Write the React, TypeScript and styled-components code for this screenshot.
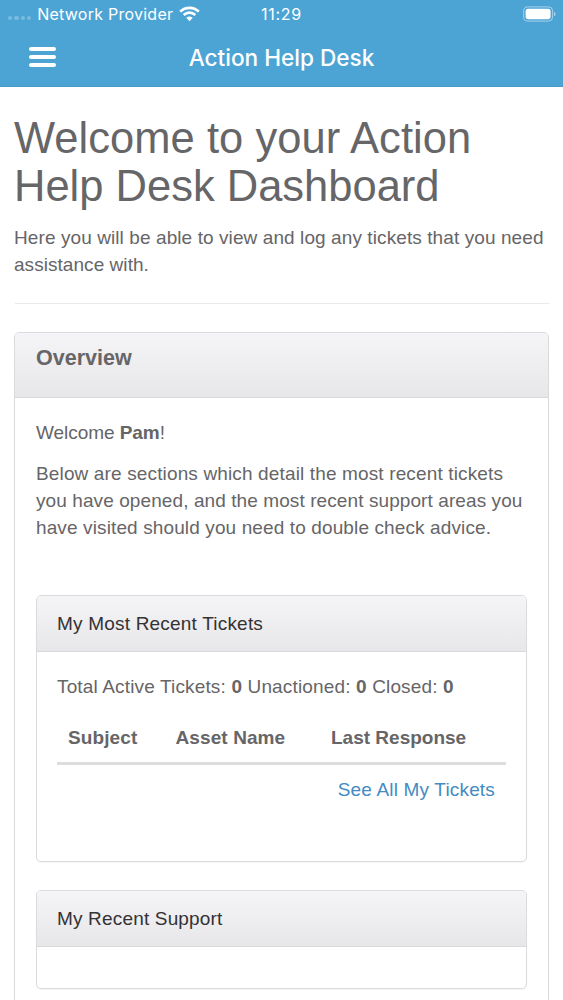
import React from 'react';
import styled, { createGlobalStyle } from 'styled-components';

const GlobalStyle = createGlobalStyle`
  * { box-sizing: border-box; }
  html, body { margin: 0; height: 1000px; overflow: hidden; }
  body {
    background: #fff;
    color: #666567;
    font: 19px/27px "Liberation Sans", Arial, sans-serif;
  }
  p, h1, h2 { margin: 0; }
`;

const Screen = styled.div`
  display: flex;
  flex-direction: column;
  height: 1000px;
  overflow: hidden;
`;

const TopBar = styled.header`
  flex: none;
  height: 87px;
  background: #4ca4d5;
  border-bottom: 1px solid #4799c8;
  color: #fff;
  font-family: Inter, sans-serif;
`;

const StatusBar = styled.div`
  display: grid;
  grid-template-columns: 1fr auto 1fr;
  align-items: center;
  height: 28px;
  padding: 0 7px 0 8px;
  font-size: 16px;
  line-height: 28px;
`;

const Carrier = styled.div`
  display: flex;
  align-items: center;
  white-space: nowrap;
`;

const Signal = styled.div`
  display: flex;
  gap: 2px;
  margin: 8px 6px 0 0;
`;

const Dot = styled.i`
  width: 4.3px;
  height: 4px;
  border-radius: 2px;
  background: rgba(255, 255, 255, 0.25);
`;

const WifiIcon = styled.svg`
  margin: -1px 0 0 6px;
`;

const BatteryIcon = styled.svg`
  justify-self: end;
`;

const NavBar = styled.div`
  display: grid;
  grid-template-columns: 1fr auto 1fr;
  align-items: center;
  height: 58px;
  padding: 0 29px;
`;

const MenuButton = styled.button`
  display: flex;
  flex-direction: column;
  gap: 3.6px;
  width: 27px;
  padding: 0;
  border: 0;
  background: none;
`;

const MenuLine = styled.span`
  height: 4px;
  border-radius: 2px;
  background: #fff;
`;

const Text = styled.span<{ $ls?: number }>`
  display: inline-block;
  white-space: nowrap;
  letter-spacing: ${(p) => p.$ls ?? 0.1}px;
`;

const Clock = styled.div`
  padding-right: 1px;
`;

const NavTitle = styled.div`
  padding-top: 1px;
  font-size: 22.6px;
  font-weight: 550;
  line-height: 30px;
`;

const Content = styled.main`
  flex: 1;
  display: flex;
  flex-direction: column;
  padding: 27px 14px 0;
`;

const Heading = styled.h1`
  font-size: 43.5px;
  line-height: 48px;
  font-weight: 400;
`;

const Intro = styled.p`
  margin-top: 14px;
`;

const Divider = styled.hr`
  width: 534px;
  height: 1px;
  margin: 25px 0 28px 1px;
  border: 0;
  background: #eae9eb;
`;

const Panel = styled.section<{ $height: number }>`
  flex: none;
  height: ${(p) => p.$height}px;
  border: 1px solid #dbdadd;
  border-radius: 5px;
  box-shadow: 0 1px 1px rgba(0, 0, 0, 0.04);
  background: #fff;
`;

const PanelHead = styled.div<{ $height: number }>`
  height: ${(p) => p.$height}px;
  padding: 14px 20px 0;
  border-bottom: 1px solid #d9d8db;
  border-radius: 4px 4px 0 0;
  background: linear-gradient(#f5f4f6, #e7e6e9);
  color: #333234;
`;

const PanelTitle = styled.h2`
  margin: -2px 0 0 1px;
  font-size: 21.5px;
  line-height: 27px;
  font-weight: 700;
  color: #666567;
`;

const OverviewBody = styled.div`
  padding: 21px 21px 0;
`;

const Details = styled.p`
  margin: 14px 0 54px;
`;

const PanelStack = styled.div`
  display: flex;
  flex-direction: column;
  gap: 28px;
`;

const TicketsBody = styled.div`
  padding: 21px 20px 0;
`;

const TableHead = styled.div`
  display: grid;
  grid-template-columns: 107.5px 155.5px 1fr;
  height: 65px;
  padding: 24px 0 0 11px;
  border-bottom: 3px solid #dddcdf;
  font-weight: 700;
`;

const LinkRow = styled.div`
  display: flex;
  justify-content: flex-end;
  padding: 11px 11px 0 0;
`;

const Link = styled.a`
  color: #438bc2;
`;

export default function App() {
  return (
    <Screen>
      <GlobalStyle />
      <TopBar>
        <StatusBar>
          <Carrier>
            <Signal>
              <Dot /><Dot /><Dot /><Dot />
            </Signal>
            <Text $ls={0.25}>Network Provider</Text>
            <WifiIcon width="21" height="16" viewBox="0 0 21 16" fill="none">
              <path d="M1.2 5.6C6.3.5 14.7.5 19.8 5.6" stroke="#fff" strokeWidth="2.7" />
              <path d="M4.7 9C8 5.8 13 5.8 16.3 9" stroke="#fff" strokeWidth="2.6" />
              <path d="M7.3 11.8Q10.5 9 13.7 11.8L10.5 15.2Z" fill="#fff" />
            </WifiIcon>
          </Carrier>
          <Clock><Text $ls={0.7}>11:29</Text></Clock>
          <BatteryIcon width="33" height="16" viewBox="0 0 33 16">
            <rect x=".7" y=".9" width="28.9" height="14.2" rx="4" fill="none" stroke="#fff" strokeOpacity=".5" />
            <rect x="2.6" y="2.8" width="25" height="10.4" rx="2.4" fill="#fff" />
            <path d="M31 5.7c2 .7 2 3.9 0 4.6Z" fill="#fff" fillOpacity=".5" />
          </BatteryIcon>
        </StatusBar>
        <NavBar>
          <MenuButton aria-label="Menu">
            <MenuLine /><MenuLine /><MenuLine />
          </MenuButton>
          <NavTitle><Text $ls={0}>Action Help Desk</Text></NavTitle>
        </NavBar>
      </TopBar>
      <Content>
        <Heading>
          <Text $ls={0.05}>Welcome to your Action</Text><br />
          <Text $ls={0}>Help Desk Dashboard</Text>
        </Heading>
        <Intro>
          <Text $ls={0.09}>Here you will be able to view and log any tickets that you need</Text><br />
          <Text $ls={0.05}>assistance with.</Text>
        </Intro>
        <Divider />
        <Panel $height={720}>
          <PanelHead $height={65}>
            <PanelTitle><Text $ls={0}>Overview</Text></PanelTitle>
          </PanelHead>
          <OverviewBody>
            <p><Text $ls={-0.05}>Welcome <b>Pam</b>!</Text></p>
            <Details>
              <Text $ls={0.14}>Below are sections which detail the most recent tickets</Text><br />
              <Text $ls={0.09}>you have opened, and the most recent support areas you</Text><br />
              <Text $ls={0.12}>have visited should you need to double check advice.</Text>
            </Details>
            <PanelStack>
              <Panel $height={267}>
                <PanelHead $height={56}><Text $ls={0.2}>My Most Recent Tickets</Text></PanelHead>
                <TicketsBody>
                  <p><Text $ls={0.15}>Total Active Tickets: <b>0</b> Unactioned: <b>0</b> Closed: <b>0</b></Text></p>
                  <TableHead>
                    <span><Text>Subject</Text></span>
                    <span><Text>Asset Name</Text></span>
                    <span><Text $ls={0}>Last Response</Text></span>
                  </TableHead>
                  <LinkRow><Link><Text $ls={0.17}>See All My Tickets</Text></Link></LinkRow>
                </TicketsBody>
              </Panel>
              <Panel $height={99}>
                <PanelHead $height={56}><Text $ls={0.17}>My Recent Support</Text></PanelHead>
              </Panel>
            </PanelStack>
          </OverviewBody>
        </Panel>
      </Content>
    </Screen>
  );
}
